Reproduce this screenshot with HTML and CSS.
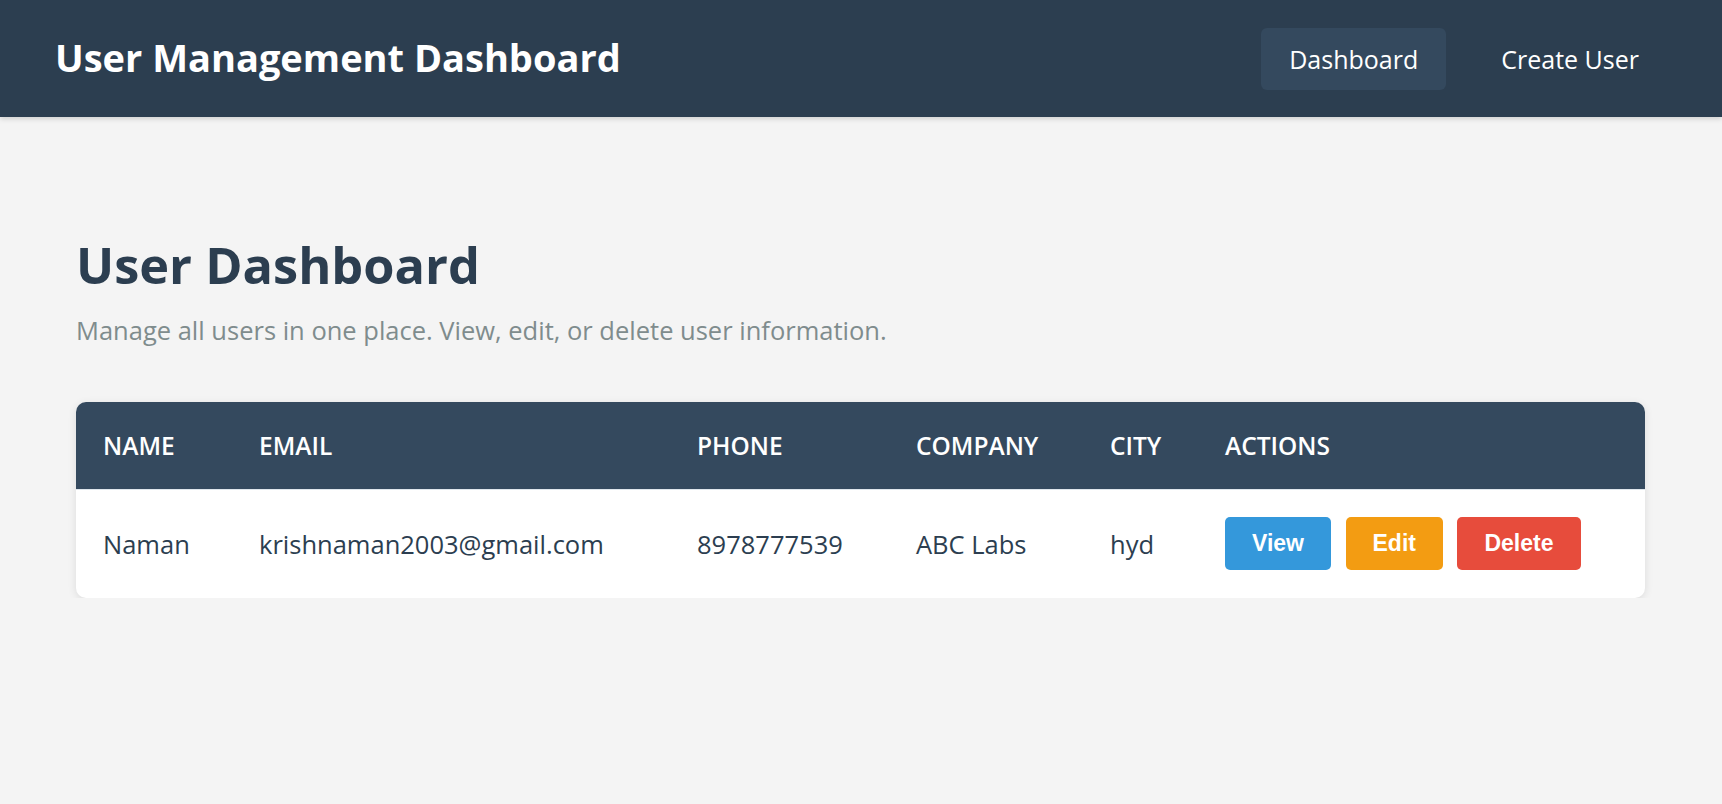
FILE: index.html
```html
<!DOCTYPE html>
<html lang="en">
<head>
<meta charset="utf-8">
<title>User Management Dashboard</title>
<link rel="stylesheet" href="styles.css">
</head>
<body>
<header class="navbar">
  <h1 class="brand">User Management Dashboard</h1>
  <nav class="nav">
    <a class="nav-link active" href="#">Dashboard</a>
    <a class="nav-link" href="#">Create User</a>
  </nav>
</header>
<main class="container">
  <h2 class="page-title">User Dashboard</h2>
  <p class="page-sub">Manage all users in one place. View, edit, or delete user information.</p>
  <div class="card">
    <table class="users">
      <colgroup>
        <col class="c-name">
        <col class="c-email">
        <col class="c-phone">
        <col class="c-company">
        <col class="c-city">
        <col class="c-actions">
      </colgroup>
      <thead>
        <tr>
          <th>Name</th>
          <th>Email</th>
          <th>Phone</th>
          <th>Company</th>
          <th>City</th>
          <th>Actions</th>
        </tr>
      </thead>
      <tbody>
        <tr>
          <td>Naman</td>
          <td>krishnaman2003@gmail.com</td>
          <td>8978777539</td>
          <td>ABC Labs</td>
          <td>hyd</td>
          <td>
            <div class="actions">
              <button class="btn btn-view">View</button>
              <button class="btn btn-edit">Edit</button>
              <button class="btn btn-delete">Delete</button>
            </div>
          </td>
        </tr>
      </tbody>
    </table>
  </div>
</main>
</body>
</html>
```

FILE: styles.css
```css
* { box-sizing: border-box; }

body {
  margin: 0;
  background: #f4f4f4;
  font-family: "Open Sans", "Noto Sans", sans-serif;
  color: #2c3e50;
}

.navbar {
  height: 117px;
  background: #2c3e50;
  display: flex;
  align-items: center;
  justify-content: space-between;
  padding: 0 55px 0 55px;
  box-shadow: 0 2px 5px rgba(0, 0, 0, 0.15);
}

.brand {
  margin: 0 0 3px;
  color: #ffffff;
  font-size: 38px;
  font-weight: 700;
}

.nav {
  display: flex;
  gap: 27px;
}

.nav-link {
  display: block;
  height: 62px;
  line-height: 62px;
  padding: 0 28px;
  border-radius: 6px;
  color: #ffffff;
  text-decoration: none;
  font-size: 25px;
}

.nav-link.active {
  background: #34495e;
}

.container {
  padding: 118px 77px 0 76px;
}

.page-title {
  margin: 0;
  font-size: 50.5px;
  line-height: 60px;
  font-weight: 700;
  color: #2c3e50;
}

.page-sub {
  margin: 17px 0 0;
  font-size: 25.5px;
  line-height: 36px;
  color: #7f8c8d;
}

.card {
  margin-top: 54px;
  background: #ffffff;
  border-radius: 10px;
  box-shadow: 0 2px 8px rgba(0, 0, 0, 0.1);
  overflow: hidden;
}

.users {
  width: 100%;
  border-collapse: collapse;
  table-layout: fixed;
}

.c-name { width: 156px; }
.c-email { width: 438px; }
.c-phone { width: 219px; }
.c-company { width: 194px; }
.c-city { width: 115px; }

.users th {
  background: #34495e;
  color: #ffffff;
  text-align: left;
  text-transform: uppercase;
  font-weight: 600;
  font-size: 24.5px;
  line-height: 36px;
  padding: 25.5px 27px 25px;
}

.users td {
  padding: 27.5px 27px;
  font-size: 25.5px;
  color: #2c3e50;
  border-top: 1px solid #dfe6ec;
  white-space: nowrap;
}

.actions {
  display: flex;
  gap: 14.5px;
}

.btn {
  height: 53px;
  padding: 0 27px;
  border: none;
  border-radius: 5px;
  color: #ffffff;
  font-family: "Liberation Sans", Arial, sans-serif;
  font-weight: 700;
  font-size: 23px;
  line-height: 53px;
}

.btn-view { background: #3498db; }
.btn-edit { background: #f39c12; }
.btn-delete { background: #e74c3c; }
```
